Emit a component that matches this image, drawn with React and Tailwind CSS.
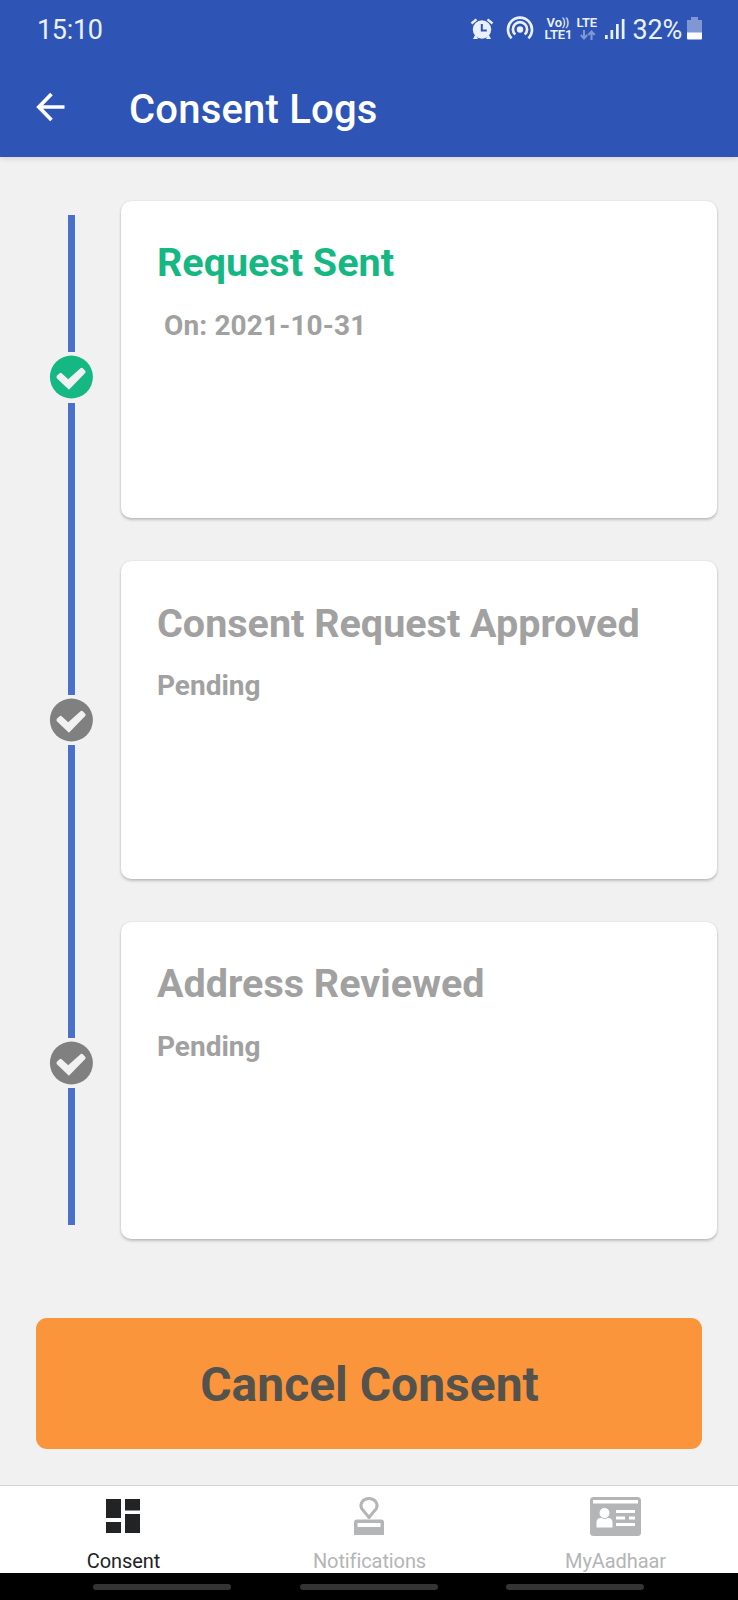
const entries = [
  { title: "Request Sent", sub: "On: 2021-10-31", done: true },
  { title: "Consent Request Approved", sub: "Pending", done: false },
  { title: "Address Reviewed", sub: "Pending", done: false },
];

function CheckNode({ className }) {
  return (
    <div className="flex h-[50.500px] w-full shrink-0 items-center justify-center">
      <svg width="44" height="44" viewBox="0 0 44 44" className={className}>
        <circle cx="22.400" cy="22" r="21.500" fill="currentColor" />
        <path d="M7.900 20.800l2.700-2.600q1.200-.8 2.300.2l6.300 5.900L31.500 13.300q1.200-1 2.300 0l2.400 2.500q1 1.200 0 2.300L19.900 34.800 7.900 23.200q-1-1.200 0-2.400z" fill="#f1f1f1" />
      </svg>
    </div>
  );
}

function AlarmIcon() {
  return (
    <svg width="24" height="22" viewBox="0 0 24 22" fill="none">
      <path d="M1.500 5.500L6.500 1.300M22.500 5.500L17.500 1.300" stroke="#eaf1fd" strokeWidth="2.400" />
      <circle cx="12" cy="11.500" r="9.200" fill="#eaf1fd" />
      <path d="M5.500 16L3 21h5zM18.500 16l2.500 5h-5z" fill="#eaf1fd" />
      <path d="M11.800 6v6.500h5" stroke="#2e55b5" strokeWidth="2" />
    </svg>
  );
}

function HotspotIcon() {
  return (
    <svg width="28" height="25" viewBox="0 0 28 25" fill="none" stroke="#eaf1fd" strokeWidth="2.700">
      <circle cx="14" cy="14.500" r="3.200" fill="#eaf1fd" stroke="none" />
      <path d="M5.600 23.200A12 12 0 1 1 22.400 23.200" />
      <path d="M9.300 19.600A7.100 7.100 0 1 1 18.700 19.600" />
    </svg>
  );
}

function StatusBar() {
  return (
    <div className="flex h-[60px] items-start justify-between pl-[37px] pr-[36.500px] text-[#eaf1fd]">
      <span className="mt-[14px] text-[27px] leading-8 tracking-[-0.3px]">15:10</span>
      <div className="flex items-start">
        <div className="mt-[18px] w-[36px]"><AlarmIcon /></div>
        <div className="mt-[15px] w-[39px]"><HotspotIcon /></div>
        <div className="mt-[17px] w-[32px] text-[13px] font-semibold leading-[12px]">
          <div className="pl-[2px]">Vo<span className="align-[1px] text-[10px] leading-none">))</span></div>
          <div className="tracking-[-0.1px]">LTE1</div>
        </div>
        <div className="mt-[17px] w-[28px] text-[13px] font-semibold leading-[12px] tracking-[-0.1px]">
          <div>LTE</div>
          <svg width="16" height="10" viewBox="0 0 16 10" className="ml-[3px] mt-px" fill="none" stroke="#8199d3" strokeWidth="2">
            <path d="M4 0v8M.8 5L4 8.500 7.200 5M11.500 10V2M8.300 5l3.200-3.500L14.700 5" />
          </svg>
        </div>
        <svg width="28" height="22" viewBox="0 0 28 22" className="mt-[18px]" fill="#eaf1fd">
          <path d="M0 17h2.700v4H0zM5.500 12h2.700v9H5.500zM11 6h2.700v15H11zM16.800 1h2.700v20h-2.700z" />
        </svg>
        <span className="mt-[14px] w-[54px] text-[27px] leading-8 tracking-[-0.2px]">32%</span>
        <svg width="15" height="23" viewBox="0 0 15 23" className="mt-[17px]">
          <path d="M0 3h4V0h7v3h4v13H0z" fill="#7f98d4" />
          <path d="M0 15.500h15V21.500q0 1-1 1H1q-1 0-1-1z" fill="#fafcff" />
        </svg>
      </div>
    </div>
  );
}

function Header() {
  return (
    <header className="z-10 h-[157px] shrink-0 bg-[#2e55b5] shadow-[0_1px_6px_rgba(0,0,0,0.15)]">
      <StatusBar />
      <div className="flex h-[97px] items-start pl-9">
        <svg width="30" height="30" viewBox="0 0 30 30" className="mt-8" fill="none" stroke="#fff" strokeWidth="3.700">
          <path d="M28.500 15H3M15.500 2L2.800 15l12.700 13" />
        </svg>
        <h1 className="ml-[63px] mt-[27px] text-[40px] font-medium leading-[46px] tracking-[0.2px] text-white">Consent Logs</h1>
      </div>
    </header>
  );
}

function Timeline() {
  return (
    <div className="mt-[14px] flex h-[1010px] w-[50px] flex-col items-center">
      <div className="h-[137px] w-[7px] bg-[#4a70ca]" />
      <CheckNode className="text-[#15b882]" />
      <div className="w-[7px] flex-1 bg-[#4a70ca]" />
      <CheckNode className="text-[#808080]" />
      <div className="w-[7px] flex-1 bg-[#4a70ca]" />
      <CheckNode className="text-[#808080]" />
      <div className="h-[137px] w-[7px] bg-[#4a70ca]" />
    </div>
  );
}

function LogCard({ title, sub, done }) {
  return (
    <section className="h-[317.300px] rounded-[10px] bg-white pl-9 pt-[39.300px] shadow-[0_2px_3px_rgba(0,0,0,0.2),0_0_2px_rgba(0,0,0,0.12)]">
      <h2 className={done ? "text-[39.500px] font-bold leading-[46px] text-[#15b882]" : "text-[39.500px] font-bold leading-[46px] text-[#a1a1a1]"}>{title}</h2>
      <p className={done ? "mt-[23.400px] pl-[7px] text-[28px] font-bold leading-8 tracking-[0.14px] text-[#a1a1a1]" : "mt-[23.400px] text-[28px] font-bold leading-8 text-[#a1a1a1]"}>{sub}</p>
    </section>
  );
}

function DashboardIcon() {
  return (
    <svg width="34" height="34" viewBox="0 0 34 34" fill="#212325">
      <path d="M0 0h15v19H0zM19 0h15v11.500H19zM0 23h15v11H0zM19 15h15v19H19z" />
    </svg>
  );
}

function StampIcon() {
  return (
    <svg width="30" height="38" viewBox="0 0 30 38">
      <path d="M15 20.500L7.600 11.500C5.500 6.500 9 1.500 15 1.500s9.500 5 7.400 10z" fill="none" stroke="#b4b5b6" strokeWidth="3" strokeLinejoin="round" />
      <path fillRule="evenodd" d="M3 22.500h24q3 0 3 3V38H0V25.500q0-3 3-3zM3.500 26v4h23v-4z" fill="#b4b5b6" />
    </svg>
  );
}

function IdCardIcon() {
  return (
    <svg width="51" height="39" viewBox="0 0 51 39">
      <rect width="51" height="39" rx="3.500" fill="#b4b5b6" />
      <path d="M3 3h45v3.500H3zM26 13h19v3H26zM26 19.500h9v3h-9zM39 19.500h6v3h-6zM26 26h19v3H26zM6.500 30.500v-5q0-4.500 4.500-4.500h7q4.500 0 4.500 4.500v5z" fill="#fff" />
      <circle cx="14.500" cy="16" r="5.500" fill="#fff" stroke="#b4b5b6" />
    </svg>
  );
}

function Tab({ icon, label, active }) {
  return (
    <div className={active ? "flex w-[246px] flex-col items-center text-[#212325]" : "flex w-[246px] flex-col items-center text-[#b4b5b6]"}>
      <div className="flex h-[60px] items-center">{icon}</div>
      <span className="mt-[3px] pl-px text-[20px] leading-6 tracking-[-0.1px]">{label}</span>
    </div>
  );
}

export default function App() {
  return (
    <div className="flex h-[1600px] w-[738px] flex-col overflow-hidden bg-[#f1f1f1] font-['Roboto',sans-serif]">
      <Header />
      <main className="flex-1 pt-11">
        <div className="flex pl-[46px]">
          <Timeline />
          <div className="ml-[25px] flex w-[596px] flex-col gap-[43.200px]">
            {entries.map((e) => <LogCard key={e.title} {...e} />)}
          </div>
        </div>
        <button className="ml-9 mt-[78.700px] flex h-[131.500px] w-[666px] items-center justify-center rounded-[11px] bg-[#fb953b] pl-px pt-[2px] text-[48px] font-bold leading-[56px] text-[#54524d]">Cancel Consent</button>
      </main>
      <nav className="flex h-[88px] shrink-0 border-t border-[#d6d6d6] bg-white">
        <Tab active label="Consent" icon={<DashboardIcon />} />
        <Tab label="Notifications" icon={<StampIcon />} />
        <Tab label="MyAadhaar" icon={<IdCardIcon />} />
      </nav>
      <div className="flex h-[27px] shrink-0 items-start gap-[68.500px] bg-black pl-[93px] pt-[11px]">
        <div className="h-[6px] w-[138px] rounded-full bg-[#343434]" />
        <div className="h-[6px] w-[138px] rounded-full bg-[#343434]" />
        <div className="h-[6px] w-[138px] rounded-full bg-[#343434]" />
      </div>
    </div>
  );
}
